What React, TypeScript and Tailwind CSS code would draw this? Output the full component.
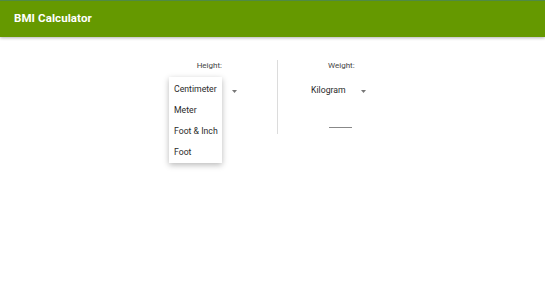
import React from 'react';

function Caret() {
    return (
        <svg width="5" height="3" viewBox="0 0 5 3" className="block">
            <path d="M0 0 L5 0 L2.5 3 Z" fill="#777" />
        </svg>
    );
}

export default function App() {
    const units = ['Centimeter', 'Meter', 'Foot & Inch', 'Foot'];

    return (
        <div className="w-[545px] h-[300px] bg-white overflow-hidden relative" style={{ fontFamily: 'Roboto, "Liberation Sans", sans-serif' }}>
            {/* App bar */}
            <header className="h-[37px] bg-[#659900] border-t border-[#4f8a45] flex items-center pl-[14px] shadow-[0_1px_3px_rgba(0,0,0,0.3)] relative z-10">
                <h1 className="text-white font-bold text-[11.5px] leading-none tracking-[0.1px]">BMI Calculator</h1>
            </header>

            <div className="flex pt-[24px]">
                {/* Height column */}
                <div className="w-[277px] flex flex-col items-end pr-[40px] relative">
                    <span className="text-[8px] leading-[10px] text-[#444] mr-[15px]">Height:</span>
                    <div className="mt-[14px] flex items-center gap-[12px] h-[12px]">
                        <span className="text-[8.7px] text-[#222] invisible">Centimeter</span>
                        <Caret />
                    </div>

                    {/* Open dropdown menu */}
                    <div className="absolute left-[169px] top-[16px] w-[53px] h-[86px] bg-white shadow-[0_2px_6px_rgba(0,0,0,0.28)] flex flex-col pt-[2px]">
                        {units.map((u) => (
                            <div key={u} className="h-[21px] pl-[5px] flex items-center text-[8.7px] text-[#2a2a2a] whitespace-nowrap">
                                {u}
                            </div>
                        ))}
                    </div>
                </div>

                {/* Divider */}
                <div className="w-px h-[74px] bg-[#dcdcdc] -mt-[1px]" />

                {/* Weight column */}
                <div className="flex flex-col pl-[33px]">
                    <span className="text-[8px] leading-[10px] text-[#444] ml-[17px]">Weight:</span>
                    <div className="mt-[14px] flex items-center gap-[15px] h-[12px]">
                        <span className="text-[8.7px] text-[#2a2a2a]">Kilogram</span>
                        <Caret />
                    </div>
                    <div className="mt-[30px] ml-[18px] w-[23px] h-px bg-[#888]" />
                </div>
            </div>
        </div>
    );
}
